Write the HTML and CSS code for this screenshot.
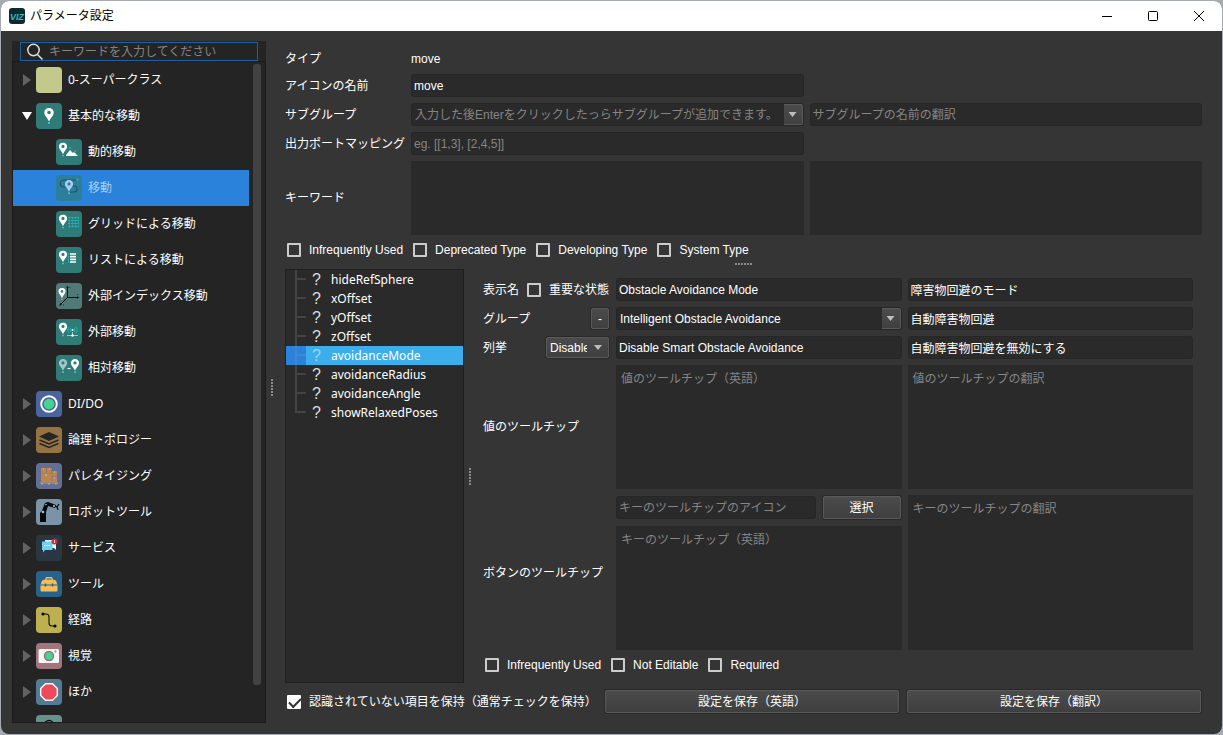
FILE: index.html
```html
<!DOCTYPE html>
<html lang="ja">
<head>
<meta charset="utf-8">
<title>パラメータ設定</title>
<link rel="stylesheet" href="styles.css">
</head>
<body>
<svg class="defs" aria-hidden="true">
  <symbol id="pin" viewBox="0 0 10 16"><path d="M5 0a4.600 4.600 0 0 0-4.700 4.700C.3 7.700 3.400 9.500 5 13.500 6.600 9.500 9.700 7.700 9.700 4.700A4.600 4.600 0 0 0 5 0zm0 2.700a1.800 1.800 0 1 1 0 3.600 1.800 1.800 0 0 1 0-3.600z" fill-rule="evenodd"/><circle cx="5" cy="15" r="1" fill="#6fc3dc"/></symbol>
</svg>
<div class="window">
  <header class="titlebar">
    <svg class="logo" viewBox="0 0 16 16"><rect width="16" height="16" rx="3" fill="#0b2b31"/><text x="8" y="12" text-anchor="middle" class="logo-text">VIZ</text></svg>
    <h1 class="title">パラメータ設定</h1>
    <button class="win-btn" aria-label="最小化"><svg viewBox="0 0 10 10"><path d="M0 5.500h10"/></svg></button>
    <button class="win-btn" aria-label="最大化"><svg viewBox="0 0 10 10"><rect x="0.500" y="0.500" width="9" height="9" rx="1"/></svg></button>
    <button class="win-btn" aria-label="閉じる"><svg viewBox="0 0 10 10"><path d="M0 0l10 10M10 0L0 10"/></svg></button>
  </header>
  <main class="main">
    <aside class="sidebar">
      <label class="search">
        <svg viewBox="0 0 18 18"><circle cx="7.500" cy="7" r="5.700"/><path d="M11.500 11.500l5 5"/></svg>
        <input type="text" aria-label="検索" placeholder="キーワードを入力してください">
      </label>
      <div class="tree-box">
        <ul class="tree">
          <li class="node"><button class="arrow" aria-label="展開"></button>
            <svg class="icon" viewBox="0 0 26 26"><rect width="26" height="26" rx="4" fill="#c3c98a"/></svg>0-スーパークラス</li>
          <li class="node"><button class="arrow open" aria-label="折りたたむ"></button>
            <svg class="icon" viewBox="0 0 26 26"><rect width="26" height="26" rx="4" fill="#2e7b77"/><use href="#pin" x="8" y="4.500" width="10" height="17" fill="#fff"/></svg>基本的な移動</li>
          <li class="node child">
            <svg class="icon" viewBox="0 0 26 26"><rect width="26" height="26" rx="4" fill="#2e7b77"/><use href="#pin" x="2.500" y="3.500" width="9" height="14" fill="#fff"/><path d="M10 16l4-5 3 3 1-1 4 4H10z" fill="#fff"/><circle cx="14" cy="9" r="0.700" fill="#6fc3dc"/><circle cx="19" cy="12" r="0.700" fill="#6fc3dc"/></svg>動的移動</li>
          <li class="node child selected">
            <svg class="icon" viewBox="0 0 26 26"><rect width="26" height="26" rx="4" fill="#2c7f9b"/><path d="M20 5H8C3 5 3 12 8 12h1M16 11h2c4 0 4 6 0 6h-4" fill="none" stroke="#1e566e" stroke-width="1.200"/><circle cx="21.500" cy="4.500" r="0.900" fill="#4fa9d8"/><use href="#pin" x="8.500" y="5" width="9" height="14" fill="#a9cdf0"/></svg>移動</li>
          <li class="node child">
            <svg class="icon" viewBox="0 0 26 26"><rect width="26" height="26" rx="4" fill="#2e7b77"/><use href="#pin" x="2.500" y="3.500" width="9" height="14" fill="#fff"/><path d="M12 6.500h11M12 9.500h11M12 12.500h11M12 15.500h11M13.500 6v11M16.500 6v11M19.500 6v11M22.500 6v11" stroke="#25b0b6" stroke-width="0.900" stroke-dasharray="2 0.600"/></svg>グリッドによる移動</li>
          <li class="node child">
            <svg class="icon" viewBox="0 0 26 26"><rect width="26" height="26" rx="4" fill="#2e7b77"/><use href="#pin" x="2.500" y="3.500" width="9" height="14" fill="#fff"/><path d="M12.500 6v10" stroke="#23b5bd" stroke-dasharray="2 0.800"/><path d="M14 7h6M14 9.700h6M14 12.400h6M14 15h6" stroke="#fff" stroke-width="1.700"/></svg>リストによる移動</li>
          <li class="node child">
            <svg class="icon" viewBox="0 0 26 26"><rect width="26" height="26" rx="4" fill="#4f7a78"/><use href="#pin" x="2" y="5" width="8" height="12" fill="#fff"/><path d="M11.500 4v10.500H22M11.500 14.500L4 22" fill="none" stroke="#111"/><path d="M10.200 5l1.300-2.500L12.800 5zM21 13.200l2.500 1.300-2.500 1.300zM4.500 20L3 23l3-1.500z" fill="#111"/><path d="M14 4v1M21.500 11v1M7 22h1" stroke="#263c3b"/></svg>外部インデックス移動</li>
          <li class="node child">
            <svg class="icon" viewBox="0 0 26 26"><rect width="26" height="26" rx="4" fill="#2e7b77"/><use href="#pin" x="2.500" y="3.500" width="9" height="14" fill="#fff"/><path d="M13 8c-1.500 2-1.500 4 0 6M14.800 9c-.8 1.500-.8 2.500 0 4M18.200 9c.8 1.500.8 2.500 0 4M20 8c1.500 2 1.500 4 0 6" fill="none" stroke="#23b5bd"/><circle cx="16.500" cy="11" r="1" fill="#fff"/><path d="M11 16.500h11M16.500 13v3" stroke="#9cc9c7"/><circle cx="16.500" cy="16.500" r="1.200" fill="#fff"/></svg>外部移動</li>
          <li class="node child">
            <svg class="icon" viewBox="0 0 26 26"><rect width="26" height="26" rx="4" fill="#2e7b77"/><use href="#pin" x="2.500" y="4" width="9" height="14" fill="#a5c8c6"/><use href="#pin" x="14.500" y="4" width="9" height="14" fill="#fff"/><path d="M11.500 13.500h3" stroke="#fff" stroke-width="1.200"/></svg>相対移動</li>
          <li class="node"><button class="arrow" aria-label="展開"></button>
            <svg class="icon" viewBox="0 0 26 26"><rect width="26" height="26" rx="4" fill="#4b639f"/><circle cx="13" cy="13" r="7.800" fill="none" stroke="#fff" stroke-width="1.900"/><circle cx="13" cy="13" r="5.300" fill="#45d391"/></svg>DI/DO</li>
          <li class="node"><button class="arrow" aria-label="展開"></button>
            <svg class="icon" viewBox="0 0 26 26"><rect width="26" height="26" rx="4" fill="#967343"/><path d="M13 5l10 4.500L13 14 3 9.500z" fill="#252525"/><path d="M3.500 13l9.500 4 9.500-4M3.500 16.500l9.500 4 9.500-4" fill="none" stroke="#252525" stroke-width="1.400"/></svg>論理トポロジー</li>
          <li class="node"><button class="arrow" aria-label="展開"></button>
            <svg class="icon" viewBox="0 0 26 26"><rect width="26" height="26" rx="4" fill="#646f95"/><path d="M5 5h5v5H5zM10.500 5h5v5h-5zM5 10.200h10.800V19H5zM16.200 8H21v5h-4.800zM16.200 13.400H21V19h-4.800z" fill="#bb8650"/><path d="M4 19.500h18v1H4zM5 20h2v1.500H5zM12 20h2v1.500h-2zM19 20h2v1.500h-2z" fill="#d29a5f"/><path d="M7 6h1M13 6h1M18 9h1M18 15h1M9 12h2" stroke="#e2c39c"/></svg>パレタイジング</li>
          <li class="node"><button class="arrow" aria-label="展開"></button>
            <svg class="icon" viewBox="0 0 26 26"><rect width="26" height="26" rx="4" fill="#7894a6"/><path d="M4 23v-9l2-2 3-8 3-1 8 3-1 3-7-2-2 6v10z" fill="#060606"/><path d="M19 7l2 1M21 8l2-3M21 8l1 3" stroke="#060606" stroke-width="1.200"/><g fill="#9fc0d2"><circle cx="7" cy="13" r="1.300"/><circle cx="10" cy="5.500" r="0.800"/><circle cx="18" cy="7" r="1.100"/></g></svg>ロボットツール</li>
          <li class="node"><button class="arrow" aria-label="展開"></button>
            <svg class="icon" viewBox="0 0 26 26"><rect width="26" height="26" rx="4" fill="#2a3740"/><path d="M9 5h11v10l-2-2H9z" fill="#f1f4f6"/><path d="M6 6.500h10.500V15H9l-2 2.500V15H6z" fill="#6fd0fa"/><path d="M8 10.500h7" stroke="#fff" stroke-dasharray="1.300 1"/><circle cx="18.500" cy="6.500" r="3" fill="#d22a33"/><path d="M18.500 5v3" stroke="#fff" stroke-width="0.800"/></svg>サービス</li>
          <li class="node"><button class="arrow" aria-label="展開"></button>
            <svg class="icon" viewBox="0 0 26 26"><rect width="26" height="26" rx="4" fill="#26628a"/><path d="M9 8.500l1-2.500h6l1 2.500 3 1 1.500 4.500v5.500a1 1 0 0 1-1 1h-15a1 1 0 0 1-1-1V14L6 9.500z" fill="#f3bd5c"/><path d="M4.500 14h17M10.500 8h5" stroke="#26628a" stroke-width="1.200"/><path d="M9.500 12.500v3M16.500 12.500v3" stroke="#26628a" stroke-width="1.500"/></svg>ツール</li>
          <li class="node"><button class="arrow" aria-label="展開"></button>
            <svg class="icon" viewBox="0 0 26 26"><rect width="26" height="26" rx="4" fill="#bdb04e"/><path d="M7 7h3q3 0 3 3v6q0 3 3 3h3" fill="none" stroke="#111" stroke-width="1.100"/><circle cx="7" cy="7" r="1.600"/><circle cx="19" cy="19" r="1.600"/></svg>経路</li>
          <li class="node"><button class="arrow" aria-label="展開"></button>
            <svg class="icon" viewBox="0 0 26 26"><rect width="26" height="26" rx="4" fill="#a2757c"/><rect x="2.500" y="6" width="20.500" height="14" rx="1.500" fill="#f7f7f7"/><circle cx="13" cy="13" r="4.500" fill="#45d391" stroke="#997078" stroke-width="1.500"/><circle cx="19.500" cy="8.500" r="1" fill="#a2757c"/></svg>視覚</li>
          <li class="node"><button class="arrow" aria-label="展開"></button>
            <svg class="icon" viewBox="0 0 26 26"><rect width="26" height="26" rx="4" fill="#517c93"/><path d="M9.500 4.700h7l4.800 4.800v7l-4.800 4.800h-7l-4.800-4.800v-7z" fill="#ef4a5b" stroke="#f4f4f4" stroke-width="1.500"/></svg>ほか</li>
          <li class="node">
            <svg class="icon" viewBox="0 0 26 26"><rect width="26" height="26" rx="4" fill="#68918e"/><circle cx="13" cy="10" r="4.500" fill="none" stroke="#111" stroke-width="1.300"/></svg></li>
        </ul>
        <div class="scroll"><div class="thumb"></div></div>
      </div>
    </aside>
    <div class="split-v"><i class="dots-v"></i></div>
    <section class="content">
      <form class="form">
        <span>タイプ</span><span class="wide">move</span>
        <label for="iconName">アイコンの名前</label><input class="field start" id="iconName" type="text" value="move">
        <label for="subgroup">サブグループ</label>
        <div class="field combo"><input id="subgroup" type="text" placeholder="入力した後Enterをクリックしたっらサブグループが追加できます。"><button type="button" class="drop" aria-label="候補を表示"></button></div>
        <input class="field" type="text" aria-label="サブグループの名前の翻訳" placeholder="サブグループの名前の翻訳">
        <label for="ports">出力ポートマッピング</label><input class="field start" id="ports" type="text" placeholder="eg. [[1,3], [2,4,5]]">
        <label for="keywords">キーワード</label><textarea class="area keywords" id="keywords"></textarea><textarea class="area keywords" aria-label="キーワードの翻訳"></textarea>
      </form>
      <div class="checks">
        <label class="check"><input type="checkbox">Infrequently Used</label>
        <label class="check"><input type="checkbox">Deprecated Type</label>
        <label class="check"><input type="checkbox">Developing Type</label>
        <label class="check"><input type="checkbox">System Type</label>
      </div>
      <div class="split-h"><i class="dots-h"></i></div>
      <div class="lower">
        <ul class="params">
          <li><i class="branch"></i><span class="param"><b>?</b>hideRefSphere</span></li>
          <li><i class="branch"></i><span class="param"><b>?</b>xOffset</span></li>
          <li><i class="branch"></i><span class="param"><b>?</b>yOffset</span></li>
          <li><i class="branch"></i><span class="param"><b>?</b>zOffset</span></li>
          <li class="current"><i class="branch"></i><span class="param"><b>?</b>avoidanceMode</span></li>
          <li><i class="branch"></i><span class="param"><b>?</b>avoidanceRadius</span></li>
          <li><i class="branch"></i><span class="param"><b>?</b>avoidanceAngle</span></li>
          <li><i class="branch"></i><span class="param"><b>?</b>showRelaxedPoses</span></li>
        </ul>
        <div class="split-v"><i class="dots-v"></i></div>
        <form class="detail">
          <div class="detail-grid">
            <div class="cell"><label for="display">表示名</label><label class="check"><input type="checkbox">重要な状態</label></div>
            <input class="field" id="display" type="text" value="Obstacle Avoidance Mode">
            <input class="field" type="text" aria-label="表示名の翻訳" value="障害物回避のモード">
            <div class="cell"><label for="group">グループ</label><button type="button" class="btn minus">-</button></div>
            <div class="field combo"><select id="group"><option>Intelligent Obstacle Avoidance</option></select><span class="drop"></span></div>
            <input class="field" type="text" aria-label="グループの翻訳" value="自動障害物回避">
            <div class="cell"><label for="enum">列挙</label><span class="btn enum"><select id="enum"><option>Disable Smart Obstacle Avoidance</option></select></span></div>
            <input class="field" type="text" aria-label="列挙の値" value="Disable Smart Obstacle Avoidance">
            <input class="field" type="text" aria-label="列挙の翻訳" value="自動障害物回避を無効にする">
            <label for="valueTip">値のツールチップ</label>
            <textarea class="area" id="valueTip" placeholder="値のツールチップ（英語）"></textarea>
            <textarea class="area" aria-label="値のツールチップの翻訳" placeholder="値のツールチップの翻訳"></textarea>
            <label class="tall" for="keyTip">ボタンのツールチップ</label>
            <div class="picker"><input class="field" type="text" aria-label="キーのツールチップのアイコン" placeholder="キーのツールチップのアイコン"><button type="button" class="btn choose">選択</button></div>
            <textarea class="area tall" aria-label="キーのツールチップの翻訳" placeholder="キーのツールチップの翻訳"></textarea>
            <textarea class="area" id="keyTip" placeholder="キーのツールチップ（英語）"></textarea>
          </div>
          <div class="checks">
            <label class="check"><input type="checkbox">Infrequently Used</label>
            <label class="check"><input type="checkbox">Not Editable</label>
            <label class="check"><input type="checkbox">Required</label>
          </div>
        </form>
      </div>
      <div class="footer">
        <label class="check"><input type="checkbox" checked>認識されていない項目を保持（通常チェックを保持）</label>
        <button class="btn">設定を保存（英語）</button>
        <button class="btn">設定を保存（翻訳）</button>
      </div>
    </section>
  </main>
</div>
</body>
</html>
```

FILE: styles.css
```css
* { box-sizing: border-box; }

body {
  margin: 0;
  height: 100vh;
  padding: 1px;
  background: #a6abb1;
  color: #fff;
  font: 12px/18px "Liberation Sans", "Noto Sans CJK JP", sans-serif;
  overflow: hidden;
}

input, textarea, select, button { font: inherit; color: inherit; margin: 0; }
ul { list-style: none; margin: 0; padding: 0; }
.defs { position: absolute; width: 0; height: 0; }

.window {
  height: 100%;
  display: flex;
  flex-direction: column;
  background: #353535;
  border-radius: 8px;
  overflow: hidden;
}

/* Title bar */
.titlebar {
  flex: none;
  height: 30px;
  display: flex;
  align-items: center;
  padding-left: 8px;
  background: #fff;
  color: #000;
}
.logo { width: 16px; height: 16px; }
.logo-text { font: italic bold 9px "Liberation Sans", sans-serif; fill: #35b8c0; }
.title { flex: 1; margin: 0 0 0 5px; font-size: 12px; font-weight: 400; }
.win-btn { width: 46px; height: 30px; padding: 0; border: 0; background: none; }
.win-btn svg { display: block; width: 10px; height: 10px; margin: 0 auto; fill: none; stroke: #000; overflow: visible; }

.main { flex: 1; min-height: 0; display: flex; padding: 10px 20px 0 11px; }

/* Sidebar */
.sidebar {
  width: 254px;
  flex: none;
  margin-bottom: 11px;
  display: flex;
  flex-direction: column;
  background: #242424;
}
.search {
  flex: none;
  display: flex;
  align-items: center;
  height: 19px;
  margin: 1px 8px 0;
  padding-left: 5px;
  gap: 5px;
  border: 1px solid #1d63a3;
}
.search svg { width: 18px; height: 18px; fill: none; stroke: #dedede; stroke-width: 1.5px; }
.search input { flex: 1; min-width: 0; padding: 0; border: 0; background: none; outline: 0; }
::placeholder { color: #858585; opacity: 1; }

.tree-box { flex: 1; min-height: 0; display: flex; border: 1px solid #1b1b1b; overflow: hidden; }
.tree { flex: 1; font-family: "Noto Sans", "Noto Sans CJK JP", sans-serif; }
.node { display: flex; align-items: center; height: 36px; padding-left: 23px; position: relative; }
.node.child { padding-left: 43px; }
.node.selected { background: #2a82da; color: #a9d0f5; }
.icon { width: 26px; height: 26px; margin-right: 6px; }
.arrow {
  position: absolute;
  left: 10px;
  width: 8px;
  height: 12px;
  padding: 0;
  border: 0;
  background: #626262;
  clip-path: polygon(0 0, 100% 50%, 0 100%);
}
.arrow.open { left: 9px; width: 10px; height: 8px; background: #fff; clip-path: polygon(0 0, 100% 0, 50% 100%); }
.scroll { width: 16px; padding: 2px 4px 37px; }
.thumb { height: 100%; border-radius: 3px; background: #424242; }

/* Splitters */
.split-v { flex: none; width: 12px; display: flex; align-items: center; justify-content: center; }
.split-h { flex: none; height: 10px; display: flex; align-items: center; justify-content: center; }
.dots-v { width: 2px; height: 17px; background: repeating-linear-gradient(#8a8a8a 0 2px, #353535 2px 3px); }
.dots-h { width: 17px; height: 2px; background: repeating-linear-gradient(90deg, #8a8a8a 0 2px, #353535 2px 3px); }

/* Content */
.content { flex: 1; min-width: 0; display: flex; flex-direction: column; padding: 9px 0 21px 7px; }
.form { display: grid; grid-template-columns: 120px 1fr 1fr; gap: 6px; align-items: center; white-space: nowrap; }
.wide { grid-column: 2 / 4; }
.start { grid-column: 2; }
.form .start + label { grid-column: 1; }

.field {
  width: 100%;
  min-width: 0;
  height: 23px;
  padding: 0 2px;
  border: 1px solid #262626;
  border-radius: 3px;
  background: #2a2a2a;
  outline: 0;
}
.combo { display: flex; padding: 0 0 0 3px; }
.combo input, .combo select { flex: 1; min-width: 0; padding: 0; border: 0; background: none; outline: 0; appearance: none; }
.drop {
  width: 19px;
  padding: 0;
  display: flex;
  align-items: center;
  justify-content: center;
  border: 1px solid #5a5a5a;
  border-left: 0;
  border-radius: 0 2px 2px 0;
  background: linear-gradient(#4c4c4c, #404040);
}
.drop::after, .enum::after {
  content: "";
  width: 8px;
  height: 5px;
  background: #bdbdbd;
  clip-path: polygon(0 0, 100% 0, 50% 100%);
}
.area {
  display: block;
  width: 100%;
  height: 100%;
  min-height: 0;
  padding: 5px;
  border: 0;
  background: #2a2a2a;
  resize: none;
  outline: 0;
}
.area.keywords { height: 74px; }

.checks { flex: none; display: flex; gap: 10px; padding-left: 2px; margin-top: 6px; }
.check { display: flex; align-items: center; gap: 8px; white-space: nowrap; }
.check input { appearance: none; width: 14px; height: 14px; border: 2px solid #ccc; border-radius: 1px; }
.check input:checked {
  border-color: #fff;
  background: #fff;
}
.check input:checked::before {
  content: "";
  display: block;
  width: 10px;
  height: 5px;
  border: solid #333;
  border-width: 0 0 2px 2px;
  transform: translateY(1px) rotate(-45deg);
}

/* Parameter list */
.lower { flex: 1; min-height: 0; display: flex; }
.params {
  width: 179px;
  flex: none;
  border: 1px solid #1f1f1f;
  background: #2a2a2a;
  font-family: "Noto Sans", sans-serif;
}
.params li { display: flex; height: 19px; line-height: 19px; }
.branch {
  width: 20px;
  background:
    linear-gradient(#444, #444) 10px 8px / 10px 2px no-repeat,
    linear-gradient(#444, #444) 9px 0 / 2px 100% no-repeat;
}
.params li:last-child .branch { background-size: 10px 2px, 2px 10px; }
.param { flex: 1; display: flex; padding-left: 6px; }
.param b { width: 19px; font: 400 16px/19px "Liberation Sans", sans-serif; color: #ddd; }
.current { background: #2a82da; }
.current .branch { background-image: linear-gradient(#3f87cf, #3f87cf), linear-gradient(#3f87cf, #3f87cf); }
.current .param { background: #3daeec; }
.current b { color: #9fd5f6; }

/* Detail form */
.detail { flex: 1; min-width: 0; display: flex; flex-direction: column; padding: 9px 9px 9px 7px; }
.detail-grid {
  flex: 1;
  min-height: 0;
  display: grid;
  grid-template-columns: 127px 1fr 1fr;
  grid-template-rows: 23px 23px 23px 1fr 25px 1fr;
  gap: 6px;
  align-items: center;
}
.cell { display: flex; align-items: center; justify-content: space-between; padding-right: 1px; white-space: nowrap; }
.tall { grid-row: 5 / 7; }
.area.tall { grid-column: 3; }
label.tall { grid-column: 1; }
.picker { grid-column: 2; display: flex; gap: 7px; padding-right: 1px; }
.picker .field { flex: 1; }
#keyTip { grid-column: 2; grid-row: 6; }

.btn {
  height: 23px;
  padding: 0;
  border: 1px solid #5a5a5a;
  border-radius: 2px;
  background: linear-gradient(#4b4b4b, #3f3f3f);
  box-shadow: 0 0 0 1px #292929;
}
.minus { width: 18px; height: 21px; }
.choose { width: 78px; }
.enum { display: flex; align-items: center; width: 63px; height: 21px; padding: 0 6px 0 3px; }
.enum select { flex: 1; min-width: 0; padding: 0; border: 0; background: none; appearance: none; outline: 0; }
.enum::after { margin-left: 7px; }

.footer { flex: none; display: grid; grid-template-columns: 310px 1fr 1fr; gap: 8px; margin-top: 7px; padding: 0 1px 0 2px; }
```
